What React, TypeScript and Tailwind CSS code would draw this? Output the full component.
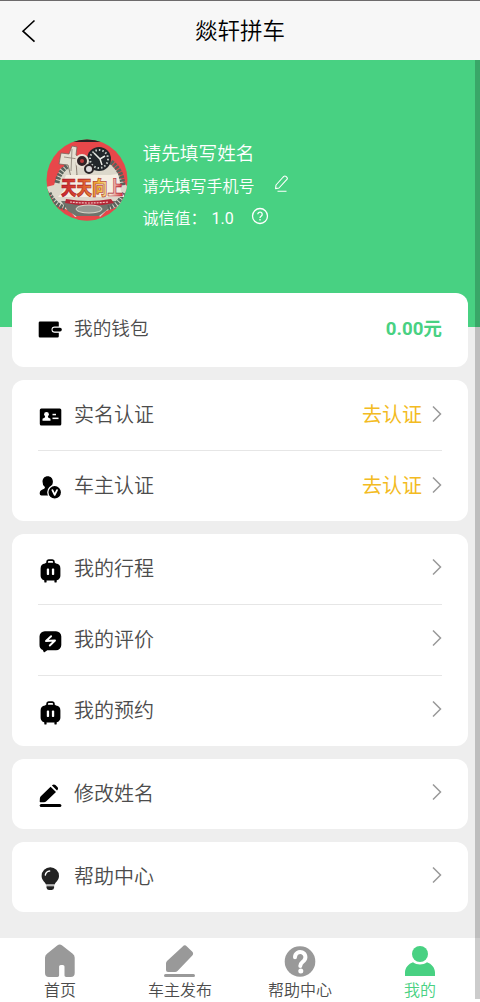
import type { ReactNode } from 'react';

function ChevronIcon() {
    return (
        <svg width="10" height="18" viewBox="0 0 10 18" fill="none" stroke="#999" strokeWidth="1.5">
            <path d="M1 1.500 8.500 9 1 16.500" />
        </svg>
    );
}

function WalletIcon() {
    return (
        <svg width="24" height="24" viewBox="0 0 24 24">
            <path d="M2 3.500h17.500a1.300 1.300 0 0 1 1.300 1.300v13.400a1.300 1.300 0 0 1-1.300 1.300H2A1.300 1.300 0 0 1 .7 18.200V4.800A1.300 1.300 0 0 1 2 3.500Z" />
            <path d="M24 9h-7.300a2.600 2.600 0 0 0 0 5.200H24" fill="#fff" stroke="#fff" strokeWidth="1.200" />
            <rect x="14.500" y="9.800" width="9.300" height="3.700" rx="1.800" />
        </svg>
    );
}

function IdCardIcon() {
    return (
        <svg width="24" height="24" viewBox="0 0 24 24">
            <rect x="1.800" y="3.500" width="21.500" height="17" rx="1.500" />
            <g fill="#fff">
                <circle cx="8.500" cy="9.300" r="2.400" />
                <path d="M7.300 10h2.400l.4 2.600 2.400 1.200v2h-8v-2l2.400-1.200z" />
                <rect x="14.500" y="8.800" width="3.500" height="1.500" />
                <rect x="14.500" y="12.600" width="6" height="1.500" />
            </g>
        </svg>
    );
}

function DriverIcon() {
    return (
        <svg width="24" height="24" viewBox="0 0 24 24">
            <path d="M9.700.2c3 0 5.200 2.200 5.200 5.300 0 2.200-.8 4-2.200 5.200 0 1.300.4 1.600 3.700 3.300L14 19.400H3.400A1.700 1.700 0 0 1 1.700 17.700c0-2.600.8-3.500 2.800-4.300 2-.8 2.500-1.200 2.400-2.500A6.500 6.500 0 0 1 4.500 5.500c0-3.100 2.200-5.300 5.200-5.300Z" />
            <circle cx="16.700" cy="16.300" r="6.900" stroke="#fff" strokeWidth="1.300" />
            <path d="m14.400 14.100 2.300 4.800 2.300-4.800" fill="none" stroke="#fff" strokeWidth="1.800" strokeLinecap="round" strokeLinejoin="round" />
        </svg>
    );
}

function SuitcaseIcon() {
    return (
        <svg width="24" height="24" viewBox="0 0 24 24">
            <path d="M9.100 4.500V2.900A1.700 1.700 0 0 1 10.800 1.200h3.400a1.700 1.700 0 0 1 1.700 1.700v1.600" fill="none" stroke="#000" strokeWidth="1.700" />
            <path d="M8 3.700h9l1 .7a5 5 0 0 1 4.400 5v7.200c0 2.800-2 5-5 5H7.600c-3 0-5-2.200-5-5V9.400a5 5 0 0 1 4.400-5Z" />
            <rect x="6.300" y="20.800" width="2.300" height="2.800" rx=".9" />
            <rect x="16.400" y="20.800" width="2.300" height="2.800" rx=".9" />
            <rect x="8.800" y="9.600" width="2.300" height="6.400" rx=".8" fill="#fff" />
            <rect x="13.900" y="9.600" width="2.300" height="6.400" rx=".8" fill="#fff" />
        </svg>
    );
}

function ReviewIcon() {
    return (
        <svg width="24" height="24" viewBox="0 0 24 24">
            <path d="M6.800 1.200h11.200A5.300 5.300 0 0 1 23.300 6.500v8.500a5.300 5.300 0 0 1-5.300 5.300H9.300l-2.500 1.800a.8.8 0 0 1-1.200-.3l-.8-1.800A5.300 5.300 0 0 1 1.500 15V6.500a5.300 5.300 0 0 1 5.300-5.300Z" />
            <path d="m13.100 6.200-5.100 4.800 9-.5-5.200 5" fill="none" stroke="#fff" strokeWidth="1.900" strokeLinecap="round" strokeLinejoin="round" />
        </svg>
    );
}

function EditNameIcon() {
    return (
        <svg width="24" height="24" viewBox="0 0 24 24">
            <path d="M12.600 2.700 18 8 8.300 17.200c-.7.700-1.400 1.100-2.400 1.100H2.300c-.4 0-.6-.3-.6-.7l.2-3.400c.1-.8.300-1.300.9-1.900Z" />
            <path d="m14 1.400.3-.3c.9-.9 2.200-.9 3.100 0l2 1.900c.9.900.9 2.200 0 3.100l-.4.400Z" />
            <rect x="1.700" y="20" width="21.700" height="3" rx="1.500" />
        </svg>
    );
}

function BulbIcon() {
    return (
        <svg width="24" height="24" viewBox="0 0 24 24" fill="#222">
            <path d="M12.300.3a8.700 8.700 0 0 1 8.700 8.700c0 3.700-2.700 5.300-4.400 8.500H8C6.300 14.300 3.600 12.700 3.600 9A8.700 8.700 0 0 1 12.300.3Z" />
            <path d="M7.300 8.200a5 5 0 0 1 4.400-4.200" fill="none" stroke="#fff" strokeWidth="1.300" strokeLinecap="round" />
            <rect x="8.300" y="17.600" width="8" height="1.500" fill="#bbb" />
            <path d="M8.500 19.300h7.600v1.200a2.400 2.400 0 0 1-2.400 2.400h-2.800a2.400 2.400 0 0 1-2.400-2.400Z" />
        </svg>
    );
}

function Avatar() {
    return (
        <svg width="82" height="82" viewBox="0 0 82 82" className="shrink-0">
            <defs>
                <clipPath id="avatar-clip">
                    <circle cx="41" cy="41" r="40.500" />
                </clipPath>
                <linearGradient id="avatar-gold" x1="0" y1="0" x2="1" y2="0">
                    <stop offset="0" stopColor="#c92330" />
                    <stop offset=".35" stopColor="#dd5a2c" />
                    <stop offset=".62" stopColor="#f0bd3c" />
                    <stop offset=".8" stopColor="#f4ead6" />
                    <stop offset="1" stopColor="#d8313a" />
                </linearGradient>
            </defs>
            <g clipPath="url(#avatar-clip)">
                <rect width="82" height="82" fill="#e8474a" />
                <path d="M20-1h42l-5 4H26Z" fill="#2b2224" />
                <path d="M0 48 8 46 14 30 24 24 62 22 71 32 77 43 82 48 74 67 60 72 54 78 29 78 24 72 10 66Z" fill="#dcd8cb" />
                <path d="M15 62 22 72 30 77 53 77 61 71 70 62Z" fill="#6f746c" />
                <g fill="none" stroke="#59635c" strokeWidth="5" strokeDasharray="2.500 1">
                    <path d="M11 44q2-12 12-18" />
                    <path d="M65 23q11 8 12 24" />
                    <path d="M3 54q5 12 16 15" />
                    <path d="M78 54q-5 12-16 15" />
                </g>
                <path d="m15 14 8 1 3-8 5 1-1 8 5 4-5 3 1 13-6 2-3-12-9-1Z" fill="#e5e1d3" stroke="#76675d" strokeWidth=".8" />
                <path d="m18 18 14 2M26 10l-1 22" stroke="#9a9186" />
                <circle cx="53" cy="20" r="12" fill="#22272a" />
                <circle cx="53" cy="20" r="9" fill="none" stroke="#c5cbc6" strokeWidth="2" strokeDasharray="1.500 2" />
                <path d="m48 14 6 6 5-3M54 20l2 6" stroke="#e9ebe4" strokeWidth="1.500" fill="none" />
                <circle cx="36" cy="22" r="6" fill="#302326" stroke="#e7e1d4" strokeWidth="2" />
                <circle cx="36" cy="22" r="2" fill="#bd3b3c" />
                <circle cx="43" cy="30" r="4" fill="#ddd" stroke="#292526" strokeWidth="2" />
                <path d="M12 58h67l-4-6-3-17-8 1H20l-4 10 2 5Z" fill="#f5eee2" />
                <text
                    x="15"
                    y="44.500"
                    fontSize="15.500"
                    fontWeight="900"
                    fontFamily="'Noto Sans CJK SC', sans-serif"
                    fill="url(#avatar-gold)"
                    stroke="#a81727"
                    strokeWidth=".5"
                    transform="scale(1 1.260)"
                >
                    天天向上
                </text>
                <path d="M20 60q22 4 45 0l3 4q-23 5-49 0Z" fill="#b52636" />
                <path d="M24 63q17 2 39 0" fill="none" stroke="#efc5bf" strokeWidth="1.200" strokeDasharray="2 1" />
                <ellipse cx="43" cy="70" rx="13" ry="4" fill="#969b93" stroke="#ddd9cd" />
                <path d="M30 77h24l-4 6H33Z" fill="#e8474a" />
            </g>
        </svg>
    );
}

function Card({ children, className = '' }: { children: ReactNode; className?: string }) {
    return <section className={`rounded-xl bg-white px-[26px] ${className}`}>{children}</section>;
}

interface RowProps {
    icon: ReactNode;
    title: string;
    action?: string;
    divider?: boolean;
}

function Row({ icon, title, action, divider }: RowProps) {
    return (
        <div className={divider ? 'flex h-[71px] items-center border-b border-[#e6e6e6]' : 'flex h-[70px] items-center'}>
            <span className="mt-[3px]">{icon}</span>
            <span className="ml-3 text-[20px] leading-7">{title}</span>
            <span className="ml-auto text-[20px] leading-7 font-normal text-[#f3bb22]">{action}</span>
            <span className={action ? '-mt-[2px] ml-[10px]' : '-mt-[5px] ml-[10px]'}>
                <ChevronIcon />
            </span>
        </div>
    );
}

const tabs = [
    {
        label: '首页',
        icon: <path d="M13.200 2.500a4 4 0 0 1 5 0l10.500 8.300a5 5 0 0 1 2 4V30a4 4 0 0 1-4 4h-4.500c-1 0-1.700-.7-1.700-1.700v-8.500c0-1-.7-1.800-1.700-1.800h-2c-1 0-1.700.8-1.700 1.800v8.500c0 1-.7 1.700-1.700 1.700H5a4 4 0 0 1-4-4V14.800a5 5 0 0 1 2-4Z" />,
    },
    {
        label: '车主发布',
        icon: (
            <>
                <path d="M18.700 3.400a3 3 0 0 1 4.200 0l5.200 5.200a3 3 0 0 1 0 4.200L13.500 28a3.500 3.500 0 0 1-2.500 1H4a2 2 0 0 1-2-2v-6.500A3.500 3.500 0 0 1 3 18Z" />
                <rect x="0" y="31" width="31" height="3" rx="1.500" />
            </>
        ),
    },
    {
        label: '帮助中心',
        icon: (
            <>
                <circle cx="16" cy="18.500" r="15.300" />
                <path d="M11 14.200a5.200 5.200 0 1 1 8.800 3.700c-2 1.900-3.500 2.300-3.500 5" fill="none" stroke="#fff" strokeWidth="4" strokeLinecap="round" />
                <circle cx="16.800" cy="28" r="2.500" fill="#fff" />
            </>
        ),
    },
    {
        label: '我的',
        active: true,
        icon: (
            <>
                <circle cx="16" cy="11" r="8" />
                <path d="M9 19.200c4 3 10 3 14 0 4.500 1.500 8 5.500 8 10.300V33H1v-3.500c0-4.800 3.500-8.800 8-10.300Z" />
            </>
        ),
    },
];

export default function App() {
    return (
        <div className="relative flex h-[1002px] w-[480px] flex-col overflow-hidden bg-[#eee] font-['Roboto','Noto_Sans_CJK_SC',sans-serif] font-[350] text-[#4c4c4c]">
            <header className="grid h-[60px] shrink-0 grid-cols-[80px_1fr_80px] items-center border-t border-[#6d6b6c] bg-[#f7f7f7]">
                <svg width="15" height="24" viewBox="0 0 15 24" className="ml-[21px]" fill="none" stroke="#000" strokeWidth="1.600">
                    <path d="M13.500 1.500 2 12.200l11.500 10.500" />
                </svg>
                <h1 className="pt-0.5 text-center text-[22.500px] font-[350] text-black">燚轩拼车</h1>
            </header>

            <div className="flex h-[267px] shrink-0 items-start bg-[#48d182] pl-[46px] pt-[76px] text-white">
                <div className="pt-[3px]">
                    <Avatar />
                </div>
                <div className="ml-[14.500px] pt-px">
                    <p className="text-[18.670px] leading-[34px]">请先填写姓名</p>
                    <div className="flex h-8 items-center text-[16px]">
                        <span>请先填写手机号</span>
                        <svg width="15" height="18" viewBox="0 0 15 18" className="-mt-1.5 ml-[19px]" fill="none" stroke="#fff" strokeWidth="1.100">
                            <path d="m9.200 2 .7-.6a1.500 1.500 0 0 1 2 0l1 1a1.500 1.500 0 0 1 0 2L5 13l-3.400.6L2 10ZM3.500 16.300h9" strokeLinejoin="round" />
                        </svg>
                    </div>
                    <div className="flex h-8 items-center text-[16px]">
                        <span>诚信值：</span>
                        <span className="ml-[5px] font-normal">1.0</span>
                        <svg width="18" height="18" viewBox="0 0 18 18" className="-mt-1.5 ml-[17px]" fill="none" stroke="#fff" strokeWidth="1.300">
                            <circle cx="9" cy="9" r="7.500" />
                            <path d="M6.800 7.300a2.200 2.200 0 1 1 3.700 1.600C9.400 9.700 9 9.900 9 11M9 12v1.400" />
                        </svg>
                    </div>
                </div>
            </div>

            <main className="-mt-[34px] flex flex-1 flex-col gap-[13px] px-3">
                <Card className="flex h-[74px] shrink-0 items-center">
                    <WalletIcon />
                    <span className="-mt-0.5 ml-3 text-[18.670px]">我的钱包</span>
                    <span className="-mt-0.5 ml-auto text-[18.670px] font-bold text-[#48d182]">0.00元</span>
                </Card>
                <Card>
                    <Row icon={<IdCardIcon />} title="实名认证" action="去认证" divider />
                    <Row icon={<DriverIcon />} title="车主认证" action="去认证" />
                </Card>
                <Card>
                    <Row icon={<SuitcaseIcon />} title="我的行程" divider />
                    <Row icon={<ReviewIcon />} title="我的评价" divider />
                    <Row icon={<SuitcaseIcon />} title="我的预约" />
                </Card>
                <Card>
                    <Row icon={<EditNameIcon />} title="修改姓名" />
                </Card>
                <Card>
                    <Row icon={<BulbIcon />} title="帮助中心" />
                </Card>
            </main>

            <nav className="grid h-16 shrink-0 grid-cols-4 bg-white">
                {tabs.map((tab) => (
                    <div
                        key={tab.label}
                        className={tab.active ? 'flex flex-col items-center pt-[5px] text-[#48d182]' : 'flex flex-col items-center pt-[5px]'}
                    >
                        <svg width="32" height="36" viewBox="0 0 32 36" fill={tab.active ? '#48d182' : '#999'}>
                            {tab.icon}
                        </svg>
                        <span className="text-[16px] leading-6">{tab.label}</span>
                    </div>
                ))}
            </nav>

            {/* scroll thumb */}
            <div className="absolute right-0 top-[60px] h-[939px] w-[5px] bg-black/20" />
        </div>
    );
}
